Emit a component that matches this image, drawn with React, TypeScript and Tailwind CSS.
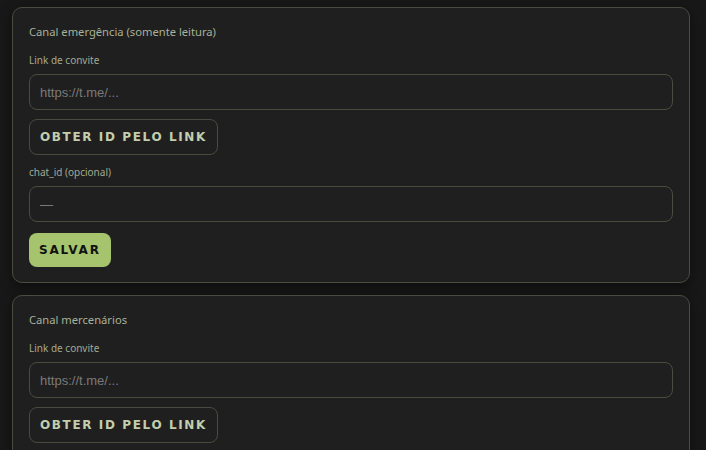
import { useState } from 'react';

// Telegram channel settings cards

interface ChannelCardProps {
  title: string;
  showChatId?: boolean;
}

const inputCls =
  "mt-[7px] block h-[36px] w-full rounded-[8px] border border-[#4b4b3f] bg-[#1f1f1f] px-[10px] font-['Liberation_Sans',Arial,sans-serif] text-[13px] text-[#d0d0d0] placeholder:text-[#7a7a7a] outline-none";

function ChannelCard({ title, showChatId = true }: ChannelCardProps) {
  const [link, setLink] = useState('');
  const [chatId, setChatId] = useState('');

  return (
    <section className="rounded-[10px] border border-[#4b4b3f] bg-[#1f1f1f] px-4 pt-[16px] pb-[15px] shadow-[0_4px_14px_rgba(0,0,0,0.45)] font-['Noto_Sans','Open_Sans',sans-serif]">
      <h3 className="text-[11.2px] leading-[16px] text-[#a9b198]">{title}</h3>

      <label className="mt-[13px] block text-[10px] leading-[14px] text-[#a2a992]">Link de convite</label>
      <input value={link} onChange={e => setLink(e.target.value)} placeholder="https://t.me/..." className={inputCls} />
      <button className="mt-[9px] flex h-[36px] items-center rounded-[8px] border border-[#4b4b3f] bg-[#1f1f1f] px-[10px] font-['DejaVu_Sans',Verdana,sans-serif] text-[12px] font-bold tracking-[0.135em] text-[#c3ceae]">
        OBTER ID PELO LINK
      </button>

      {showChatId && (
        <>
          <label className="mt-[10px] block text-[10px] leading-[14px] text-[#a2a992]">chat_id (opcional)</label>
          <input value={chatId} onChange={e => setChatId(e.target.value)} placeholder="—" className={inputCls} />
          <button className="mt-[11px] flex h-[34px] items-center rounded-[8px] bg-[#a5c46d] px-[10px] font-['DejaVu_Sans',Verdana,sans-serif] text-[12px] font-bold tracking-[0.15em] text-[#111]">
            SALVAR
          </button>
        </>
      )}
    </section>
  );
}

export default function App() {
  return (
    <div className="h-[450px] overflow-hidden bg-[#181818] px-[12px] pt-[7px]">
      <div className="flex w-[678px] flex-col gap-[12px]">
        <ChannelCard title="Canal emergência (somente leitura)" />
        <ChannelCard title="Canal mercenários" />
      </div>
    </div>
  );
}
